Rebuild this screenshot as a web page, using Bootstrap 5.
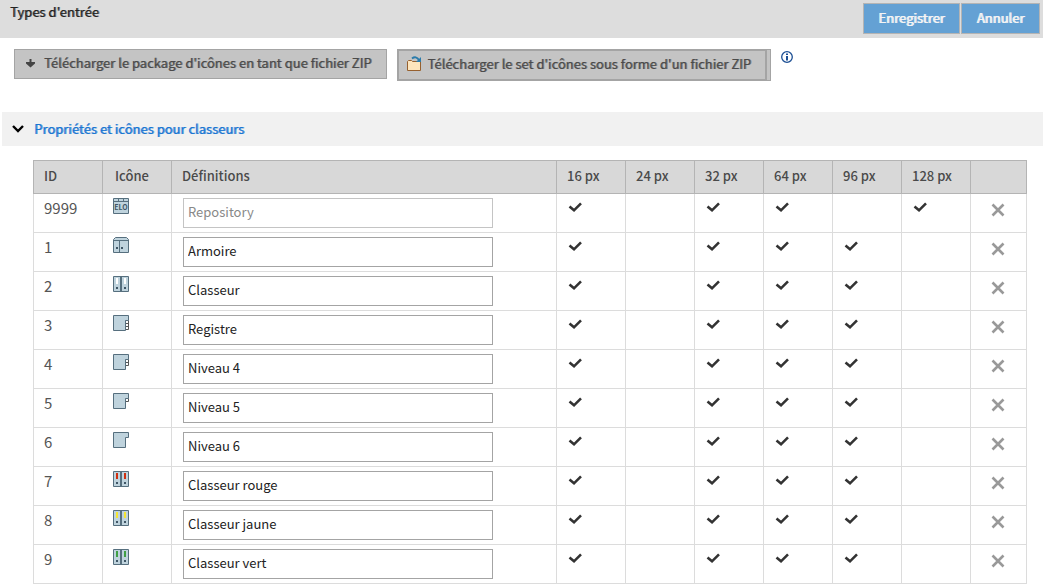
<!DOCTYPE html>
<html lang="fr">
<head>
<meta charset="utf-8">
<meta name="viewport" content="width=device-width, initial-scale=1">
<title>Types d'entrée</title>
<link rel="stylesheet" href="https://cdn.jsdelivr.net/npm/bootstrap@5.3.0/dist/css/bootstrap.min.css">
<style>
  body { font-family: "Noto Sans CJK SC", "Noto Sans", sans-serif; font-size: 13px; line-height: 20px; color: #333; background: #fff; }
  .topbar { background: #ddd; height: 38px; padding: 3px; }
  .topbar h1 { font-size: 13px; line-height: 18px; font-weight: 400; margin: 0 7px; color: #222; text-shadow: 1px 0 rgba(34, 34, 34, .6); }
  .btn { --bs-btn-border-radius: 0; --bs-btn-font-size: 13px; --bs-btn-font-weight: 400; --bs-btn-line-height: 20px; }
  .btn-action { --bs-btn-color: #f4f4f4; --bs-btn-bg: #64a1d4; --bs-btn-border-color: #b4b4b4; --bs-btn-hover-color: #fff; --bs-btn-hover-bg: #5592c6; padding: 4px 15px 5px 14px; margin-right: 1px; text-shadow: 1px 0 #f4f4f4; }
  .btn-action:last-child { margin-right: 0; }
  .btn-tool { --bs-btn-color: #4a4a4a; --bs-btn-bg: #c4c4c4; --bs-btn-border-color: #a4a4a4; --bs-btn-hover-color: #222; --bs-btn-hover-bg: #bababa; --bs-btn-hover-border-color: #a4a4a4; text-shadow: 1px 0 rgba(74, 74, 74, .6); }
  .btn-package { padding: 3px 15px 5px 10px; gap: 7px; }
  .btn-set { border-width: 2px; padding: 3px 14px 5px 7px; gap: 5px; margin: -1px 0; }
  .set-frame { background: #c4c4c4; border: 1px solid #a4a4a4; border-left: 0; padding-right: 3px; margin-left: 10px; }
  .info { margin: 2px 0 0 10px; }
  .toolbar { padding: 11px 14px 31px; }
  .section-head { background: #f1f1f1; height: 34px; margin-left: 2px; padding-left: 10px; }
  .section-head button { --bs-btn-color: #1976d2; --bs-btn-hover-color: #1976d2; gap: 10px; text-shadow: 1px 0 rgba(25, 118, 210, .7); }
  .types-wrap { padding: 14px 16px 0 33px; }
  .types { table-layout: fixed; border-collapse: collapse; width: 100%; margin: 0; color: #4a4a4a; }
  .types th { height: 33px; background: #d8d8d8; border: 1px solid #b4b4b4; padding: 0 10px 2px; font-weight: 500; }
  .types th.icon-col { padding-left: 12px; }
  .types td { height: 39px; border: 1px solid #dcdcdc; padding: 4px 10px; vertical-align: top; }
  .types tbody tr:first-child td { border-top-color: #b4b4b4; }
  .types td.id-cell { font-size: 15px; color: #555; }
  .types svg { display: block; }
  .types td.check-cell { padding: 7px 11px; }
  .c-std { width: 69px; }
  .c-end { width: 56px; }
  .name-box { display: block; width: 310px; max-width: 100%; height: 30px; margin-left: 1px; border: 1px solid #a4a4a4; border-radius: 0; padding: 0 4px 3px; font-size: 13px; color: #222; background: #fff; }
  .name-box:disabled { color: #888; border-color: #c4c4c4; }
  .remove { display: block; border: 0; background: none; padding: 5px 10px; }
  .elo { font: 700 7px "Noto Sans CJK SC", sans-serif; fill: #3f5666; }
</style>
</head>
<body>
<svg class="d-none" aria-hidden="true">
  <symbol id="i-check" viewBox="0 0 14 12"><path d="M1.5 5.5l4.500 3.800 7-7" fill="none" stroke="#333" stroke-width="2.6"/></symbol>
  <symbol id="i-x" viewBox="0 0 14 14"><path d="M1.5 1.5l11 11M12.5 1.5l-11 11" fill="none" stroke="#999" stroke-width="2.6"/></symbol>
  <symbol id="i-repo" viewBox="0 0 16 16"><path fill="#bfd3dd" stroke="#566f7e" d="M.5.5h15v15H.5zM.5 3.5h15M5.5 0v3M10.500 0v3"/><text class="elo" x="8" y="12" text-anchor="middle">ELO</text></symbol>
  <symbol id="i-cabinet" viewBox="0 0 16 16"><path fill="#bfd3dd" stroke="#566f7e" d="M.5 2.500L2.500.5h11l2 2v13H.5zM.5 3.500h15M6.500 4v12"/><path fill="#3f5666" d="M3 10h2v2H3zM8 10h2v2H8z"/></symbol>
  <symbol id="i-binder" viewBox="0 0 16 16"><path fill="#bfd3dd" stroke="#566f7e" d="M.5.5h15v15H.5z"/><path fill="#566f7e" d="M7 0h2v16H7z"/><path fill="currentColor" d="M3 2h2v6H3zM11 2h2v6h-2z"/><path fill="#3f5666" d="M3 11h2v2H3zM11 11h2v2h-2z"/></symbol>
  <symbol id="i-tab0" viewBox="0 0 16 16"><path fill="#bfd3dd" stroke="#566f7e" d="M.5.5h15v5h-3v10H.5z"/></symbol>
  <symbol id="i-tab1" viewBox="0 0 16 16"><path fill="#fff" stroke="#555" d="M12.500 5.500h3v3h-3z"/><use href="#i-tab0"/></symbol>
  <symbol id="i-tab2" viewBox="0 0 16 16"><path fill="#fff" stroke="#555" d="M12.500 5.500h3v6h-3zM13 8.500h2"/><use href="#i-tab0"/></symbol>
  <symbol id="i-tab3" viewBox="0 0 16 16"><path fill="#fff" stroke="#555" d="M12.500 5.500h3v9h-3zM13 8.500h2M13 11.500h2"/><use href="#i-tab0"/></symbol>
</svg>

<header class="topbar d-flex justify-content-between align-items-start">
  <h1>Types d'entrée</h1>
  <div class="d-flex">
    <button type="button" class="btn btn-action">Enregistrer</button>
    <button type="button" class="btn btn-action">Annuler</button>
  </div>
</header>

<main>
  <div class="toolbar d-flex align-items-start">
    <button type="button" class="btn btn-tool btn-package d-flex align-items-center">
      <svg width="12" height="12" viewBox="0 0 12 12" aria-hidden="true"><path fill="#444" d="M4.500 2h2v3H10v1.500L5.500 10.500 1 6.500V5h3.500z"/></svg>
      <span>Télécharger le package d'icônes en tant que fichier ZIP</span>
    </button>
    <div class="set-frame d-flex">
      <button type="button" class="btn btn-tool btn-set d-flex align-items-center">
        <svg width="16" height="16" viewBox="0 0 16 16" aria-hidden="true"><path fill="#fde5bd" stroke="#96602f" d="M1.500 14.500v-9l1-1h3l1 1h8v9z"/><path fill="none" stroke="#2b7cab" stroke-width="2" d="M6 2.500q4-3 7 1.500"/><path fill="#2b7cab" d="M15 1v5h-5z"/></svg>
        <span>Télécharger le set d'icônes sous forme d'un fichier ZIP</span>
      </button>
    </div>
    <svg class="info" width="12" height="12" viewBox="0 0 12 12" role="img" aria-label="Information"><circle cx="6" cy="6" r="5.300" fill="#fff" stroke="#1c4f94" stroke-width="1.300"/><path fill="#1c4f94" d="M5 2.500h2v1.500H5zM5 5h2v4.500H5z"/></svg>
  </div>

  <section>
    <div class="section-head d-flex align-items-center">
      <button type="button" class="btn border-0 p-0 d-flex align-items-center" data-bs-toggle="collapse" data-bs-target="#types" aria-expanded="true" aria-controls="types">
        <svg width="12" height="8" viewBox="0 0 12 8" aria-hidden="true"><path d="M1 1l5 5 5-5" fill="none" stroke="#000" stroke-width="2.400"/></svg>
        <span>Propriétés et icônes pour classeurs</span>
      </button>
    </div>
    <div id="types" class="collapse show">
      <div class="types-wrap">
        <table class="types">
          <colgroup><col class="c-std"><col class="c-std"><col><col class="c-std"><col class="c-std"><col class="c-std"><col class="c-std"><col class="c-std"><col class="c-std"><col class="c-end"></colgroup>
          <thead>
            <tr><th scope="col">ID</th><th scope="col" class="icon-col">Icône</th><th scope="col">Définitions</th><th scope="col">16 px</th><th scope="col">24 px</th><th scope="col">32 px</th><th scope="col">64 px</th><th scope="col">96 px</th><th scope="col">128 px</th><th></th></tr>
          </thead>
          <tbody id="rows"></tbody>
        </table>
      </div>
    </div>
  </section>
</main>
<script>
  // [id, icon, label colour of the binder, name, sizes available]
  const sizes = [16, 24, 32, 64, 96, 128];
  const usual = [16, 32, 64, 96];
  const types = [
    [9999, 'repo', '', 'Repository', [16, 32, 64, 128]],
    [1, 'cabinet', '', 'Armoire', usual],
    [2, 'binder', '#fff', 'Classeur', usual],
    [3, 'tab3', '', 'Registre', usual],
    [4, 'tab2', '', 'Niveau 4', usual],
    [5, 'tab1', '', 'Niveau 5', usual],
    [6, 'tab0', '', 'Niveau 6', usual],
    [7, 'binder', '#d03010', 'Classeur rouge', usual],
    [8, 'binder', '#f4e532', 'Classeur jaune', usual],
    [9, 'binder', '#40a044', 'Classeur vert', usual]
  ];
  const check = '<svg width="14" height="12" role="img" aria-label="Oui"><use href="#i-check"/></svg>';
  document.getElementById('rows').innerHTML = types.map(([id, icon, colour, name, has]) => `
    <tr>
      <td class="id-cell">${id}</td>
      <td><svg width="16" height="16" color="${colour || '#fff'}" aria-hidden="true"><use href="#i-${icon}"/></svg></td>
      <td><input type="text" class="name-box" aria-label="Définition ${id}" value="${name}"${id === 9999 ? ' disabled' : ''}></td>
      ${sizes.map(s => `<td class="check-cell">${has.includes(s) ? check : ''}</td>`).join('')}
      <td><button type="button" class="remove" aria-label="Supprimer ${name}"><svg width="14" height="14"><use href="#i-x"/></svg></button></td>
    </tr>`).join('');
</script>
<script src="https://cdn.jsdelivr.net/npm/bootstrap@5.3.0/dist/js/bootstrap.bundle.min.js"></script>
</body>
</html>
